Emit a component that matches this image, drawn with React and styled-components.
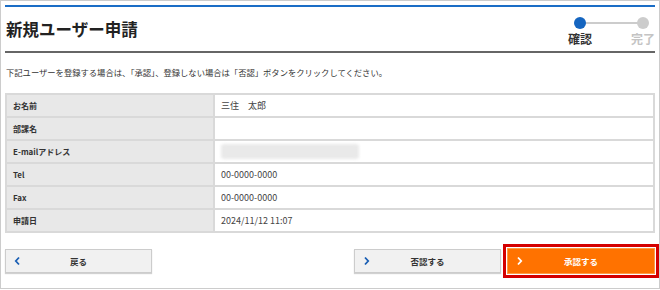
import React from "react";
import styled, { createGlobalStyle } from "styled-components";

const GlobalStyle = createGlobalStyle`
  body {
    margin: 0;
    background: #ffffff;
    font-family: "Noto Sans CJK JP", "Noto Sans", sans-serif;
    color: #333333;
  }
`;

const Frame = styled.div`
  box-sizing: border-box;
  width: 660px;
  height: 289px;
  border: 1px solid #cccccc;
  padding: 4px 4px 0;
`;

const Header = styled.header`
  display: flex;
  justify-content: space-between;
  height: 44px;
  border-top: 2px solid #1a6dc6;
  border-bottom: 2px solid #666666;
`;

const Title = styled.h1`
  margin: 0;
  padding-left: 1px;
  align-self: center;
  font-size: 16.5px;
  line-height: 20px;
  font-weight: 700;
  color: #222222;
`;

const Stepper = styled.ol`
  position: relative;
  display: flex;
  gap: 37px;
  margin: 0 -1px 0 0;
  padding: 10px 0 0;
  list-style: none;
`;

const StepLine = styled.span`
  position: absolute;
  top: 15px;
  left: 18px;
  right: 18px;
  height: 2px;
  background: #cccccc;
`;

const Step = styled.li`
  position: relative;
  display: flex;
  flex-direction: column;
  align-items: center;
  gap: 3px;
  width: 26px;
`;

const Dot = styled.span`
  width: 12px;
  height: 12px;
  border-radius: 50%;
  background: ${(p) => (p.$active ? "#1565c0" : "#cccccc")};
`;

const StepLabel = styled.span`
  font-size: 12px;
  line-height: 14px;
  font-weight: 700;
  white-space: nowrap;
  color: ${(p) => (p.$active ? "#333333" : "#c4c4c4")};
`;

const Lead = styled.p`
  margin: 13px 0 15px;
  padding-left: 1px;
  font-size: 8.3px;
  line-height: 12px;
  color: #333333;
  font-feature-settings: "fwid";
`;

const Table = styled.table`
  width: 100%;
  border-collapse: collapse;
  border: 2px solid #d9d9d9;
`;

const Label = styled.th`
  box-sizing: border-box;
  width: 208px;
  height: 21px;
  padding: 0 0 0 6px;
  border: 2px solid #d9d9d9;
  background: #e8e8e8;
  text-align: left;
  font-size: 8px;
  font-weight: 700;
  color: #333333;
`;

const Value = styled.td`
  height: 21px;
  padding: 0 0 0 6px;
  border: 2px solid #d9d9d9;
  font-size: 9px;
  color: #444444;
`;

const Blurred = styled.span`
  display: inline-block;
  vertical-align: middle;
  width: 138px;
  height: 15px;
  border-radius: 3px;
  background: #e9e9e9;
  filter: blur(1.5px);
`;

const Actions = styled.div`
  display: flex;
  justify-content: space-between;
  align-items: center;
  margin-top: 15px;
`;

const Group = styled.div`
  display: flex;
  align-items: center;
  gap: 6px;
`;

const Button = styled.button`
  position: relative;
  box-sizing: border-box;
  display: flex;
  align-items: center;
  justify-content: center;
  width: ${(p) => (p.$primary ? "148px" : "147px")};
  height: ${(p) => (p.$primary ? "26px" : "24px")};
  padding: 0;
  border: 1px solid ${(p) => (p.$primary ? "#ff9c45" : "#cccccc")};
  background: ${(p) => (p.$primary ? "#ff7200" : "#f1f1f1")};
  box-shadow: ${(p) => (p.$primary ? "none" : "0 1px 1px rgba(0, 0, 0, 0.18)")};
  outline: ${(p) => (p.$primary ? "3px solid #d40000" : "none")};
  outline-offset: 1px;
  font-family: inherit;
  font-size: 8.5px;
  font-weight: 700;
  color: ${(p) => (p.$primary ? "#ffffff" : "#333333")};
  cursor: pointer;

  svg {
    position: absolute;
    left: 8px;
    top: 50%;
    transform: translateY(-50%);
  }
`;

const Chevron = ({ dir, color }) => (
  <svg width="7" height="9" viewBox="0 0 7 9">
    <polyline
      points={dir === "left" ? "5,1 1.8,4.5 5,8" : "2,1 5.2,4.5 2,8"}
      fill="none"
      stroke={color}
      strokeWidth="1.8"
    />
  </svg>
);

const rows = [
  ["お名前", "三住　太郎"],
  ["部課名", ""],
  ["E-mailアドレス", null],
  ["Tel", "00-0000-0000"],
  ["Fax", "00-0000-0000"],
  ["申請日", "2024/11/12 11:07"],
];

export default function App() {
  return (
    <>
      <GlobalStyle />
      <Frame>
        <Header>
          <Title>新規ユーザー申請</Title>
          <Stepper>
            <StepLine />
            <Step>
              <Dot $active />
              <StepLabel $active>確認</StepLabel>
            </Step>
            <Step>
              <Dot />
              <StepLabel>完了</StepLabel>
            </Step>
          </Stepper>
        </Header>
        <Lead>
          下記ユーザーを登録する場合は、「承認」、登録しない場合は「否認」ボタンをクリックしてください。
        </Lead>
        <Table>
          <tbody>
            {rows.map(([label, value]) => (
              <tr key={label}>
                <Label>{label}</Label>
                <Value>{value === null ? <Blurred /> : value}</Value>
              </tr>
            ))}
          </tbody>
        </Table>
        <Actions>
          <Button>
            <Chevron dir="left" color="#1a5fb4" />
            戻る
          </Button>
          <Group>
            <Button>
              <Chevron dir="right" color="#1a5fb4" />
              否認する
            </Button>
            <Button $primary>
              <Chevron dir="right" color="#ffffff" />
              承認する
            </Button>
          </Group>
        </Actions>
      </Frame>
    </>
  );
}
